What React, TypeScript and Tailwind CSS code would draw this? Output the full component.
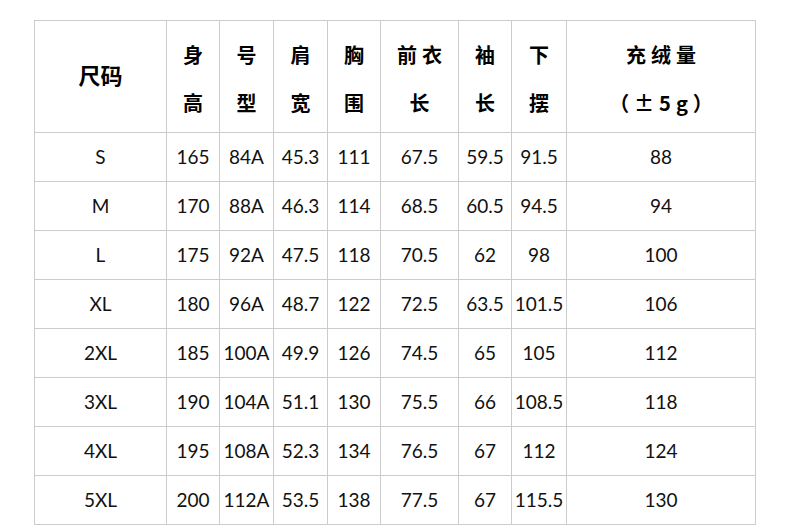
import React from "react";

const cols = "grid-cols-[132px_53px_54px_54px_53px_78px_53px_55px_189px]";

const header: string[][] = [
  ["尺码"],
  ["身", "高"],
  ["号", "型"],
  ["肩", "宽"],
  ["胸", "围"],
  ["前衣", "长"],
  ["袖", "长"],
  ["下", "摆"],
  ["充绒量", "（±5g）"],
];

const rows: string[][] = [
  ["S", "165", "84A", "45.3", "111", "67.5", "59.5", "91.5", "88"],
  ["M", "170", "88A", "46.3", "114", "68.5", "60.5", "94.5", "94"],
  ["L", "175", "92A", "47.5", "118", "70.5", "62", "98", "100"],
  ["XL", "180", "96A", "48.7", "122", "72.5", "63.5", "101.5", "106"],
  ["2XL", "185", "100A", "49.9", "126", "74.5", "65", "105", "112"],
  ["3XL", "190", "104A", "51.1", "130", "75.5", "66", "108.5", "118"],
  ["4XL", "195", "108A", "52.3", "134", "76.5", "67", "112", "124"],
  ["5XL", "200", "112A", "53.5", "138", "77.5", "67", "115.5", "130"],
];

export default function App() {
  return (
    <div className="w-[790px] h-[525px] bg-white overflow-hidden">
      <div className={`ml-[34px] mt-[20px] grid ${cols} w-[722px] border-l border-t border-[#cccccc] text-black`}>
        {header.map((lines, i) => (
          <div
            key={"h" + i}
            className={`h-[112px] border-r border-b border-[#cccccc] flex flex-col items-center justify-center font-bold whitespace-nowrap ${
              lines.length === 1 ? "pb-[6px]" : "pt-[4px]"
            }`}
            style={{ fontFamily: '"Noto Sans CJK SC", "Noto Sans", sans-serif' }}
          >
            {lines.length === 1 ? (
              <span className="text-[22px] leading-[48px]">{lines[0]}</span>
            ) : (
              lines.map((l, j) => (
                <span key={j} className="text-[20px] leading-[48px] tracking-[5px] pl-[5px]">
                  {l}
                </span>
              ))
            )}
          </div>
        ))}
        {rows.map((r, ri) =>
          r.map((c, ci) => (
            <div
              key={ri + "-" + ci}
              className="h-[49px] border-r border-b border-[#cccccc] flex items-center justify-center whitespace-nowrap text-[19px] text-[#111]"
              style={{ fontFamily: 'Lato, "Liberation Sans", sans-serif' }}
            >
              {c}
            </div>
          ))
        )}
      </div>
    </div>
  );
}
